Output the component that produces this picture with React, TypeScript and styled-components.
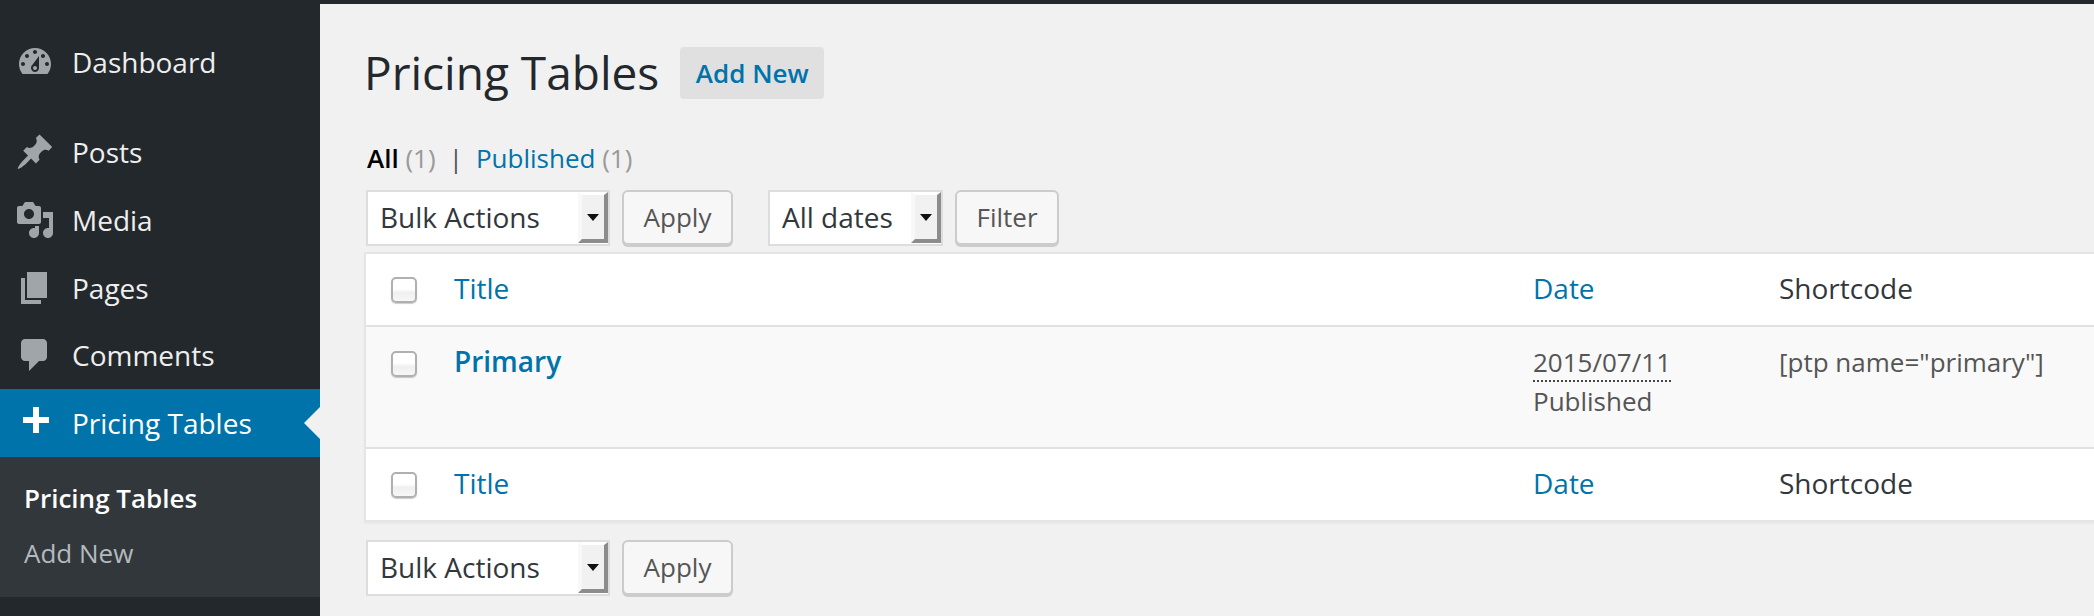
import React from "react";
import styled, { createGlobalStyle } from "styled-components";

const Global = createGlobalStyle`
  html, body { margin: 0; padding: 0; background: #f1f1f1; overflow: hidden; }
  body { width: 2094px; height: 616px; font-family: "Open Sans", "Liberation Sans", sans-serif; color: #32373c; }
`;

const Page = styled.div`
  display: flex;
  width: 2094px;
  height: 616px;
  overflow: hidden;
  background: #f1f1f1;
`;

const Sidebar = styled.nav`
  flex: 0 0 320px;
  width: 320px;
  height: 616px;
  background: #23282d;
  padding-top: 28px;
  box-sizing: border-box;
`;

const MenuItem = styled.div<{ $active?: boolean; $gap?: boolean }>`
  position: relative;
  display: flex;
  align-items: center;
  height: ${(p) => (p.$active ? 68 : 67.6)}px;
  margin-bottom: ${(p) => (p.$gap ? 23 : 0)}px;
  padding-left: 15px;
  background: ${(p) => (p.$active ? "#0073aa" : "transparent")};
  color: ${(p) => (p.$active ? "#fff" : "#eee")};
  font-size: 28px;
  svg { fill: ${(p) => (p.$active ? "#fff" : "#a0a5aa")}; }
`;

const MenuLabel = styled.span`
  margin-left: 17px;
  white-space: nowrap;
`;

const MenuArrow = styled.span`
  position: absolute;
  right: 0;
  top: 50%;
  margin-top: -16px;
  border: 16px solid transparent;
  border-right-color: #f1f1f1;
  border-left-width: 0;
`;

const Submenu = styled.div`
  background: #32373c;
  height: 140px;
  padding-top: 14px;
  box-sizing: border-box;
`;

const SubItem = styled.div<{ $current?: boolean }>`
  height: 55px;
  line-height: 55px;
  padding-left: 24px;
  font-size: 26px;
  font-weight: ${(p) => (p.$current ? 600 : 400)};
  color: ${(p) => (p.$current ? "#fff" : "#b4b9be")};
`;

const Main = styled.main`
  flex: 1;
  min-width: 0;
  overflow: hidden;
  padding: 21px 0 0 44px;
  border-top: 4px solid #23282d;
`;

const Heading = styled.div`
  display: flex;
  align-items: center;
  height: 95px;
`;

const Title = styled.h1`
  margin: 0;
  font-size: 46px;
  font-weight: 400;
  color: #23282d;
  line-height: 95px;
`;

const AddNew = styled.a`
  margin-left: 21px;
  height: 52px;
  line-height: 52px;
  width: 144px;
  text-align: center;
  border-radius: 4px;
  background: #e0e0e0;
  color: #0073aa;
  font-size: 26px;
  font-weight: 600;
`;

const Views = styled.div`
  height: 54px;
  line-height: 54px;
  font-size: 26px;
  margin-top: 11px;
  padding-left: 3px;
  color: #666;
  white-space: nowrap;
`;

const Strong = styled.span` color: #000; font-weight: 600; `;
const Count = styled.span` color: #999; `;
const Link = styled.span` color: #0073aa; `;
const Sep = styled.span` color: #555; margin: 0 13px; `;

const Toolbar = styled.div`
  display: flex;
  align-items: flex-start;
  height: 62px;
  margin-top: 5px;
  padding-left: 2px;
`;

const Select = styled.div<{ $width: number }>`
  position: relative;
  box-sizing: border-box;
  width: ${(p) => p.$width}px;
  height: 56px;
  border: 2px solid #ddd;
  background: #fff;
  font-size: 28px;
  line-height: 51px;
  padding-left: 12px;
  color: #32373c;
`;

const SelectArrow = styled.span`
  position: absolute;
  right: 0;
  top: 0;
  bottom: 1px;
  width: 30px;
  box-sizing: border-box;
  background: #f1f1f1;
  border-style: solid;
  border-width: 3px 4px 4px 4px;
  border-color: #fff #8c8c8c #8c8c8c #f8f8f8;
  &::after {
    content: "";
    position: absolute;
    left: 5px;
    top: 19px;
    border: 6px solid transparent;
    border-top: 7px solid #111;
    border-bottom-width: 0;
  }
`;

const Button = styled.button<{ $width: number }>`
  box-sizing: border-box;
  width: ${(p) => p.$width}px;
  height: 55px;
  margin-left: 12px;
  border: 2px solid #ccc;
  border-radius: 6px;
  background: #f7f7f7;
  box-shadow: 0 2px 0 #ccc;
  color: #555;
  font-family: inherit;
  font-size: 26px;
  padding: 0 0 2px;
`;

const Spacer = styled.div` width: 35px; `;

const Table = styled.div`
  width: 1780px;
  border: 2px solid #e5e5e5;
  border-right: 0;
  box-shadow: 0 2px 2px rgba(0, 0, 0, 0.04);
  box-sizing: border-box;
  background: #fff;
`;

const Row = styled.div<{ $body?: boolean }>`
  display: grid;
  grid-template-columns: 88px 1079px 246px 1fr;
  height: ${(p) => (p.$body ? 124 : 71)}px;
  box-sizing: border-box;
  align-items: ${(p) => (p.$body ? "start" : "center")};
  background: ${(p) => (p.$body ? "#f9f9f9" : "#fff")};
  ${(p) => p.$body && "border-top: 2px solid #e1e1e1; border-bottom: 2px solid #e1e1e1;"}
`;

const CheckCell = styled.div<{ $body?: boolean }>`
  padding-left: 25px;
  display: flex;
  ${(p) => p.$body && "padding-top: 24px;"}
`;

const Check = styled.span`
  display: block;
  box-sizing: border-box;
  width: 26px;
  height: 26px;
  border-radius: 5px;
  border: 2px solid #b0b0b0;
  background: linear-gradient(#fff 45%, #efefef 62%, #f7f7f7 100%);
  box-shadow: 0 1px 1px rgba(0,0,0,0.2);
`;

const HeadLink = styled.span`
  font-size: 28px;
  color: #0073aa;
  line-height: 1;
  padding-bottom: 3px;
`;

const HeadText = styled.span`
  font-size: 28px;
  color: #32373c;
  line-height: 1;
  padding-bottom: 3px;
`;

const PostTitle = styled.div`
  padding-top: 14px;
  font-size: 28px;
  font-weight: 600;
  color: #0073aa;
  line-height: 40px;
`;

const Cell = styled.div`
  padding-top: 16px;
  font-size: 26px;
  line-height: 38px;
  color: #555;
`;

const Abbr = styled.span`
  display: inline-block;
  border-bottom: 2px dotted #444;
  line-height: 36px;
`;

const Footer = styled.div`
  display: flex;
  align-items: flex-start;
  margin-top: 18px;
  padding-left: 2px;
`;

const Icon = ({ d, size = 40 }: { d: string; size?: number }) => (
  <svg width={size} height={size} viewBox="0 0 20 20" aria-hidden="true"><path d={d} /></svg>
);

const icons = {
  dashboard: "M3.76 16h12.48c1.1-1.37 1.76-3.11 1.76-5 0-4.42-3.58-8-8-8s-8 3.58-8 8c0 1.89.66 3.63 1.76 5zM10 4c.55 0 1 .45 1 1s-.45 1-1 1-1-.45-1-1 .45-1 1-1zM6 6c.55 0 1 .45 1 1s-.45 1-1 1-1-.45-1-1 .45-1 1-1zm8 0c.55 0 1 .45 1 1s-.45 1-1 1-1-.45-1-1 .45-1 1-1zm-5.37 5.55L12 7v6c0 1.1-.9 2-2 2s-2-.9-2-2c0-.57.24-1.08.63-1.45zM4 10c.55 0 1 .45 1 1s-.45 1-1 1-1-.45-1-1 .45-1 1-1zm12 0c.55 0 1 .45 1 1s-.45 1-1 1-1-.45-1-1 .45-1 1-1zm-5 3c0-.55-.45-1-1-1s-1 .45-1 1 .45 1 1 1 1-.45 1-1z",
  post: "M10.44 3.02l1.82-1.82 6.36 6.35-1.83 1.82c-1.05-.68-2.48-.57-3.41.36l-.75.75c-.92.93-1.04 2.35-.35 3.41l-1.83 1.82-2.41-2.41-2.8 2.79c-.42.42-3.38 2.71-3.8 2.29s1.86-3.39 2.28-3.81l2.79-2.79L4.1 9.36l1.83-1.82c1.05.69 2.48.57 3.4-.36l.75-.75c.93-.92 1.05-2.35.36-3.41z",
  media: "M13 11V4c0-.55-.45-1-1-1h-1.67L9 1H5L3.67 3H2c-.55 0-1 .45-1 1v7c0 .55.45 1 1 1h10c.55 0 1-.45 1-1zM7 4.5c1.38 0 2.5 1.12 2.5 2.5S8.38 9.5 7 9.5 4.5 8.38 4.5 7 5.62 4.5 7 4.5zM14 6h5v10.5c0 1.38-1.12 2.5-2.5 2.5S14 17.88 14 16.5s1.12-2.5 2.5-2.5c.17 0 .34.02.5.05V9h-3V6zm-4 8.05V13h2v3.5c0 1.38-1.12 2.5-2.5 2.5S7 17.88 7 16.5 8.12 14 9.5 14c.17 0 .34.02.5.05z",
  page: "M6 15V2h10v13H6zm-1 1h8v2H3V5h2v11z",
  comments: "M5 2h9c1.1 0 2 .9 2 2v7c0 1.1-.9 2-2 2h-2l-5 5v-5H5c-1.1 0-2-.9-2-2V4c0-1.1.9-2 2-2z",
  plus: "M17 7v3h-5v5H9v-5H4V7h5V2h3v5h5z",
};

const BulkActions = () => (
  <Select $width={244}>Bulk Actions<SelectArrow /></Select>
);

export default function App() {
  return (
    <Page>
      <Global />
      <Sidebar>
        <MenuItem $gap><Icon d={icons.dashboard} /><MenuLabel>Dashboard</MenuLabel></MenuItem>
        <MenuItem><Icon d={icons.post} /><MenuLabel>Posts</MenuLabel></MenuItem>
        <MenuItem><Icon d={icons.media} /><MenuLabel>Media</MenuLabel></MenuItem>
        <MenuItem><Icon d={icons.page} /><MenuLabel>Pages</MenuLabel></MenuItem>
        <MenuItem><Icon d={icons.comments} /><MenuLabel>Comments</MenuLabel></MenuItem>
        <MenuItem $active><Icon d={icons.plus} /><MenuLabel>Pricing Tables</MenuLabel><MenuArrow /></MenuItem>
        <Submenu>
          <SubItem $current>Pricing Tables</SubItem>
          <SubItem>Add New</SubItem>
        </Submenu>
      </Sidebar>
      <Main>
        <Heading>
          <Title>Pricing Tables</Title>
          <AddNew>Add New</AddNew>
        </Heading>
        <Views>
          <Strong>All</Strong> <Count>(1)</Count><Sep>|</Sep><Link>Published</Link> <Count>(1)</Count>
        </Views>
        <Toolbar>
          <BulkActions />
          <Button $width={111}>Apply</Button>
          <Spacer />
          <Select $width={175}>All dates<SelectArrow /></Select>
          <Button $width={104}>Filter</Button>
        </Toolbar>
        <Table>
          <Row>
            <CheckCell><Check /></CheckCell>
            <HeadLink>Title</HeadLink>
            <HeadLink>Date</HeadLink>
            <HeadText>Shortcode</HeadText>
          </Row>
          <Row $body>
            <CheckCell $body><Check /></CheckCell>
            <PostTitle>Primary</PostTitle>
            <Cell><Abbr>2015/07/11</Abbr><br />Published</Cell>
            <Cell>[ptp name="primary"]</Cell>
          </Row>
          <Row>
            <CheckCell><Check /></CheckCell>
            <HeadLink>Title</HeadLink>
            <HeadLink>Date</HeadLink>
            <HeadText>Shortcode</HeadText>
          </Row>
        </Table>
        <Footer>
          <BulkActions />
          <Button $width={111}>Apply</Button>
        </Footer>
      </Main>
    </Page>
  );
}
